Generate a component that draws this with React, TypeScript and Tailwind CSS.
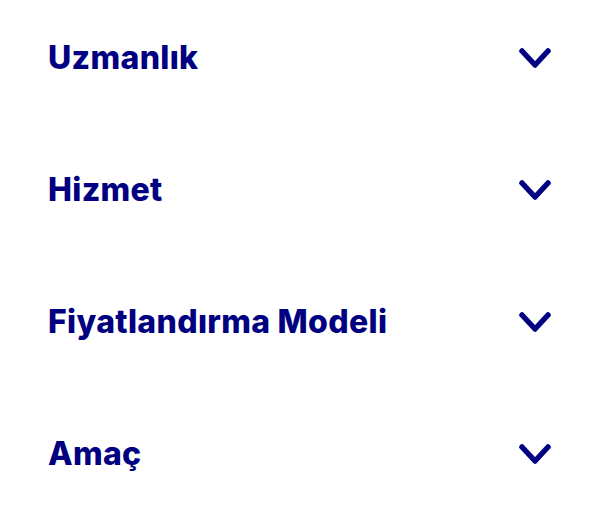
import React from "react"

const items = ["Uzmanlık", "Hizmet", "Fiyatlandırma Modeli", "Amaç"]

function Chevron() {
  return (
    <svg width="34" height="24" viewBox="0 0 34 24" fill="none" aria-hidden="true">
      <path
        d="M4 5 L17 19 L30 5"
        stroke="#000080"
        strokeWidth="5.5"
        strokeLinecap="round"
        strokeLinejoin="round"
      />
    </svg>
  )
}

export default function App() {
  return (
    <div className="min-h-[508px] w-[600px] bg-white px-12 font-['Inter',sans-serif]">
      <div className="flex flex-col gap-4">
        {items.map((label) => (
          <button
            key={label}
            type="button"
            className="flex h-[116px] w-full items-center justify-between text-left"
          >
            <span className="text-[32px] font-extrabold leading-none tracking-[0.01em] text-[#000080]">
              {label}
            </span>
            <Chevron />
          </button>
        ))}
      </div>
    </div>
  )
}
